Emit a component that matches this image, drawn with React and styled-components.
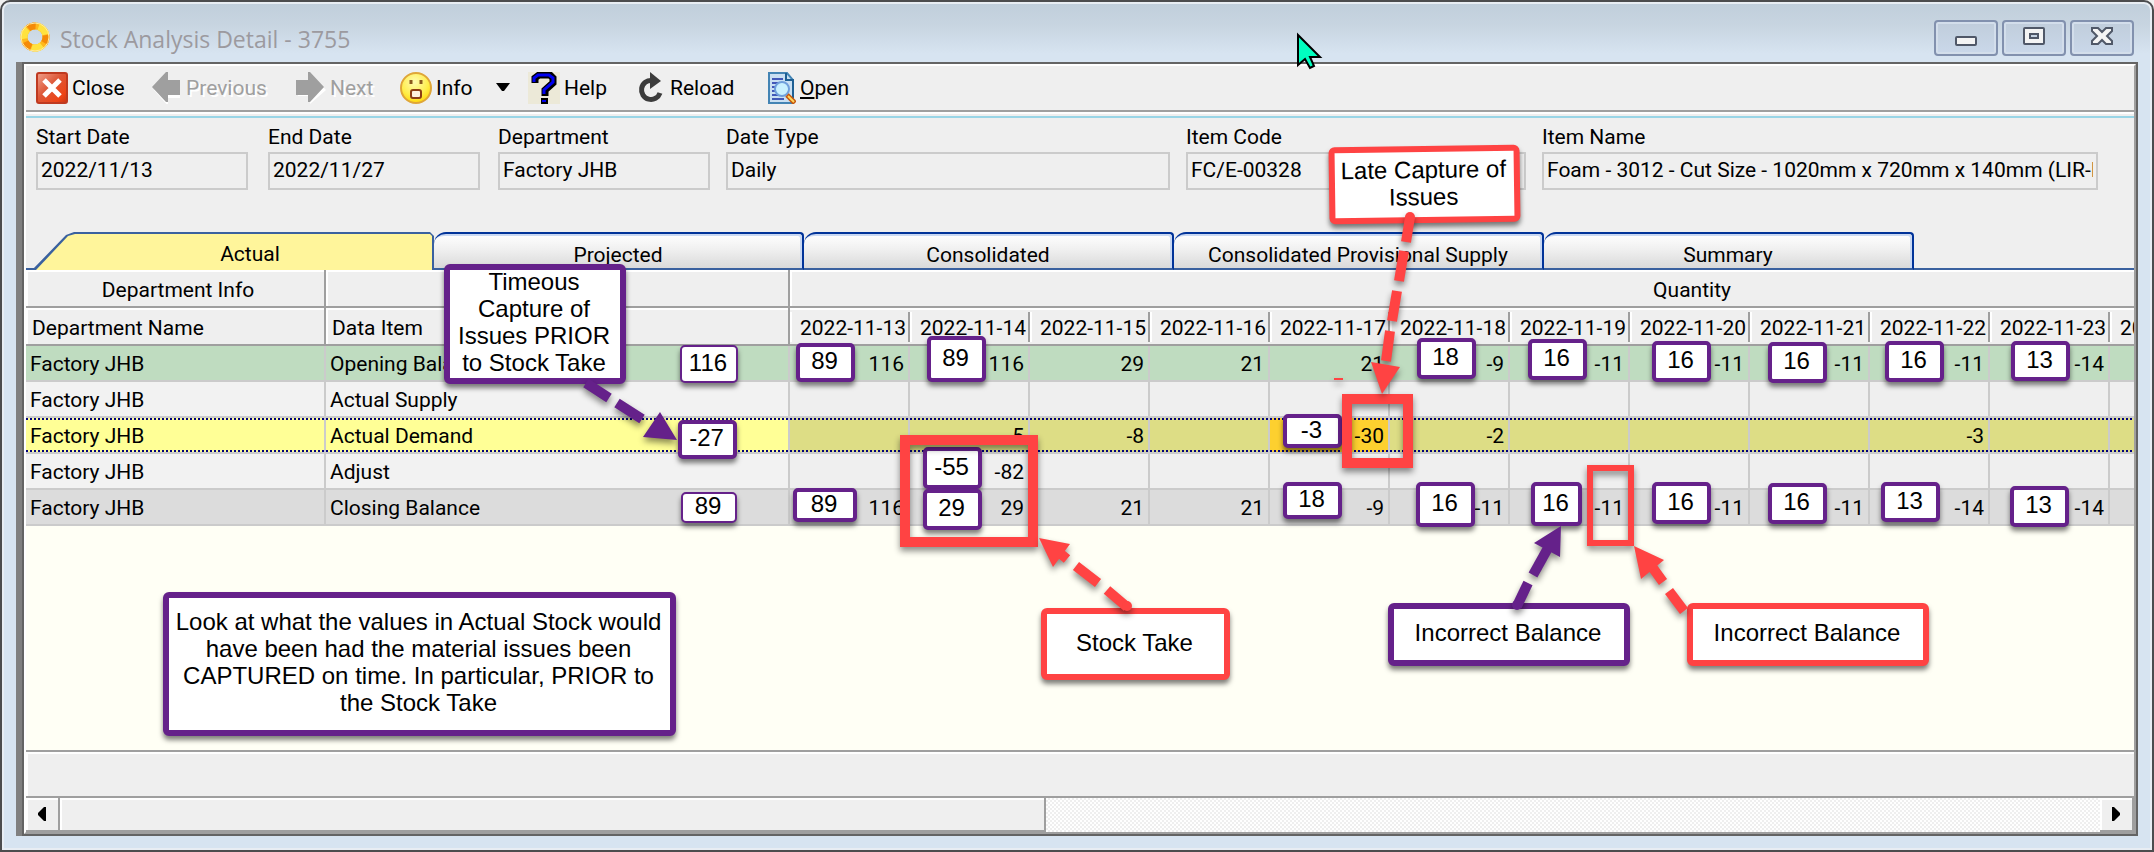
import React from "react";
import styled, { createGlobalStyle, css } from "styled-components";

const Global = createGlobalStyle`
  * { box-sizing: border-box; }
  body { margin: 0; background: #f0f0f0; }
  button, input { font: inherit; color: inherit; }
`;

const uiFont = 'Roboto, "Liberation Sans", sans-serif';
const noteFont = '"Liberation Sans", Arial, sans-serif';
const RED = "#ff4343";
const PURPLE = "#65218a";

/* ---------- window frame ---------- */

const Frame = styled.div`
  position: relative;
  display: flex;
  flex-direction: column;
  height: 100vh;
  min-height: 800px;
  overflow: hidden;
  padding: 0 14px 14px;
  border: 2px solid #4c4c4e;
  border-radius: 10px 10px 0 0;
  background: linear-gradient(#c0cedb 0, #c8d5e1 24px, #d7e4f1 52px);
  box-shadow: inset 0 0 0 2px #e8edf3;
  font: 21px/30px ${uiFont};
  color: #000;
`;

const TitleBar = styled.header`
  display: flex;
  align-items: flex-start;
  gap: 10px;
  flex: none;
  height: 60px;
  padding: 20px 4px 0 2px;
`;

const Title = styled.h1`
  flex: 1;
  margin: 0;
  padding-top: 2px;
  font: 400 23px/30px "Open Sans", "Noto Sans", sans-serif;
  color: #9c9a9f;
`;

const Controls = styled.div`
  display: flex;
  gap: 4px;
  margin-top: -2px;
`;

const ControlButton = styled.button`
  display: flex;
  align-items: center;
  justify-content: center;
  width: 64px;
  height: 36px;
  padding: 0 0 4px;
  border: 2px solid #8291ae;
  border-radius: 4px;
  background: linear-gradient(#c0cddb, #cad8ea);
  box-shadow: inset 0 0 0 2px #d3deeb;
`;

const Client = styled.main`
  display: flex;
  flex-direction: column;
  flex: 1;
  min-height: 0;
  margin: 0;
  border-left: 6px solid #808080;
`;

const Inner = styled.div`
  display: flex;
  flex-direction: column;
  flex: 1;
  min-height: 0;
  border: 2px solid #646464;
`;

const Page = styled.div`
  display: flex;
  flex-direction: column;
  flex: 1;
  min-height: 0;
  border: 2px solid #9f9f9f;
  border-top-color: #fff;
  border-left-color: #fff;
  background: #efefef;
`;

/* ---------- toolbar ---------- */

const Toolbar = styled.nav`
  display: flex;
  align-items: center;
  flex: none;
  height: 46px;
  padding-left: 10px;
  border-bottom: 2px solid #9f9f9f;
`;

const ToolButton = styled.button`
  display: flex;
  align-items: center;
  gap: 4px;
  width: ${(p) => p.$width}px;
  height: 40px;
  padding: 0;
  border: 0;
  background: none;
  white-space: nowrap;
  text-align: left;
  &:disabled {
    color: #9f9f9f;
    text-shadow: 2px 2px #fff;
  }
`;

const ToolIcon = styled.svg`
  flex: none;
  width: ${(p) => p.$w || 32}px;
  height: 32px;
`;

const Divider = styled.div`
  flex: none;
  height: 6px;
  border-top: 2px solid #fff;
  border-bottom: 2px solid #99d5e6;
`;

/* ---------- criteria form ---------- */

const Criteria = styled.form`
  display: grid;
  grid-template-columns: 216px 214px 212px 444px 340px minmax(0, 1fr);
  gap: 16px;
  flex: none;
  height: 114px;
  padding: 4px 36px 0 10px;
`;

const Field = styled.label`
  display: block;
  max-width: ${(p) => (p.$short ? "212px" : "none")};
`;

const FieldInput = styled.input`
  display: block;
  width: 100%;
  height: 38px;
  padding: 0 3px 2px;
  border: 2px solid #cbcbcb;
  border-radius: 0;
  background: #efefef;
`;

/* ---------- tabs ---------- */

const TabStrip = styled.div`
  display: flex;
  flex: none;
  height: 38px;
  &::after {
    content: "";
    flex: 1;
    border-bottom: 2px solid #3a619f;
  }
`;

const tabBase = css`
  flex: none;
  height: 38px;
  padding: 6px 0 0;
  text-align: center;
  white-space: nowrap;
`;

const Tab = styled.button`
  ${tabBase}
  width: 370px;
  border: 0 solid #003399;
  border-width: 2px 2px 2px 0;
  border-bottom-color: #3a619f;
  border-radius: 12px 4px 0 0;
  background: linear-gradient(#fff, #f0f0f0 45%, #dadada);
  box-shadow: inset -2px 2px #c9d8f2;
`;

const ActiveTab = styled.button`
  ${tabBase}
  position: relative;
  isolation: isolate;
  width: 408px;
  padding-left: 40px;
  border: 0;
  background: none;
  &::before,
  &::after {
    content: "";
    position: absolute;
    inset: 0;
    z-index: -1;
  }
  &::before {
    background: #3a619f;
    clip-path: polygon(0 36px, 8px 36px, 40px 3px, 48px 0, 404px 0, 408px 4px, 408px 38px, 0 38px);
  }
  &::after {
    background: #fff59b;
    clip-path: polygon(10px 38px, 42px 4px, 49px 2px, 404px 2px, 406px 4px, 406px 38px);
  }
`;

/* ---------- grid ---------- */

const GridArea = styled.section`
  flex: 1;
  min-height: 0;
  overflow: hidden;
  background: #fffff5;
`;

const Grid = styled.table`
  table-layout: fixed;
  width: 2564px;
  border-collapse: separate;
  border-spacing: 0;
  white-space: nowrap;
`;

const NameCol = styled.col`
  width: 300px;
`;
const ItemCol = styled.col`
  width: 464px;
`;
const DateCol = styled.col`
  width: 120px;
`;

const HeadCell = styled.th`
  height: 38px;
  padding: 4px 0 0 6px;
  border-right: 2px solid #9f9f9f;
  border-bottom: 2px solid #9f9f9f;
  background: #efefef;
  box-shadow: inset 2px 2px #fff;
  font-weight: 400;
  text-align: ${(p) => p.$align || "left"};
`;

const DateHead = styled.th`
  height: 38px;
  padding: 4px 4px 0 0;
  border-bottom: 2px solid #9f9f9f;
  background:
    linear-gradient(#9f9f9f, #9f9f9f) right 4px / 2px 30px no-repeat,
    linear-gradient(#fff, #fff) left 4px / 2px 30px no-repeat,
    #efefef;
  box-shadow: inset 0 2px #fff;
  font-weight: 400;
  text-align: right;
`;

const tones = {
  opening: ["#bfdcc0", "#bfdcc0"],
  plain: ["#f2f2f2", "#efefef"],
  selected: ["#ffff96", "#dddd85"],
  closing: ["#dcdcdc", "#dcdcdc"],
};

const dots = css`
  background-image:
    repeating-linear-gradient(90deg, #00007f 0 2px, transparent 2px 4px),
    repeating-linear-gradient(90deg, #00007f 0 2px, transparent 2px 4px);
  background-size: 100% 2px;
  background-position: top, bottom;
  background-repeat: no-repeat;
  background-clip: padding-box;
`;

const Cell = styled.td`
  height: 36px;
  padding: 2px 4px 0;
  border-right: 2px solid #cbcbcb;
  border-bottom: 2px solid #cbcbcb;
  background-color: ${(p) => (p.$flag ? "#fdd02f" : tones[p.$tone][p.$value ? 1 : 0])};
  text-align: ${(p) => (p.$value ? "right" : "left")};
  ${(p) => p.$tone === "selected" && dots}
`;

/* ---------- footer ---------- */

const SummaryBar = styled.div`
  flex: none;
  height: 48px;
  border-top: 2px solid #9f9f9f;
  border-bottom: 2px solid #9f9f9f;
  box-shadow: inset 2px 2px #fff;
`;

const ScrollBar = styled.div`
  display: flex;
  flex: none;
  height: 34px;
  background: repeating-conic-gradient(#efefef 0 25%, #fff 0 50%) 0 0 / 4px 4px;
`;

const ScrollPart = styled.button`
  flex: none;
  width: ${(p) => p.$width};
  height: 34px;
  margin-left: ${(p) => (p.$end ? "auto" : 0)};
  padding: 0;
  border: 0;
  border-right: 2px solid #9f9f9f;
  border-bottom: 2px solid #9f9f9f;
  background: #efefef;
  box-shadow: inset 2px 2px #fff;
  line-height: 0;
`;

/* ---------- annotations over the window ---------- */

const shadow = "0 4px 5px rgba(0, 0, 0, 0.5)";

const Layer = styled.div`
  position: absolute;
  inset: -2px;
  pointer-events: none;
`;

const Note = styled.div`
  position: absolute;
  left: ${(p) => p.$x}px;
  top: ${(p) => p.$y}px;
  display: flex;
  align-items: center;
  justify-content: center;
  width: ${(p) => p.$w}px;
  height: ${(p) => p.$h}px;
  padding: ${(p) => (p.$small ? "0 2px 4px 0" : "0 2px 4px 0")};
  border: ${(p) => p.$b || 6}px solid ${(p) => p.$color || PURPLE};
  border-radius: ${(p) => (p.$small ? 5 : 6)}px;
  background: #fff;
  box-shadow: ${shadow};
  font: 24px/27px ${noteFont};
  text-align: center;
  white-space: pre;
  transform: ${(p) => (p.$tilt ? "rotate(-0.8deg)" : "none")};
`;

const Marker = styled.div`
  position: absolute;
  left: ${(p) => p.$x}px;
  top: ${(p) => p.$y}px;
  width: ${(p) => p.$w}px;
  height: ${(p) => p.$h}px;
  border: ${(p) => p.$b}px solid ${RED};
  filter: drop-shadow(0 4px 3px rgba(0, 0, 0, 0.45));
`;

const Arrows = styled.svg`
  position: absolute;
  inset: 0;
  width: 100%;
  height: 100%;
  filter: drop-shadow(0 4px 3px rgba(0, 0, 0, 0.45));
`;

const Pointer = styled.svg`
  position: absolute;
  left: 1296px;
  top: 32px;
  width: 28px;
  height: 40px;
`;

/* ---------- data ---------- */

const dates = Array.from({ length: 15 }, (_, i) => `2022-11-${13 + i}`);

const rows = [
  ["Opening Balance", "opening", [116, 116, 29, 21, 21, -9, -11, -11, -11, -11, -14]],
  ["Actual Supply", "plain", []],
  ["Actual Demand", "selected", ["", -5, -8, "", -30, -2, "", "", "", -3]],
  ["Adjust", "plain", ["", -82]],
  ["Closing Balance", "closing", [116, 29, 21, 21, -9, -11, -11, -11, -11, -14, -14]],
];

const fields = [
  ["Start Date", "2022/11/13", true],
  ["End Date", "2022/11/27", true],
  ["Department", "Factory JHB", true],
  ["Date Type", "Daily"],
  ["Item Code", "FC/E-00328"],
  ["Item Name", "Foam - 3012 - Cut Size - 1020mm x 720mm x 140mm (LIR-I"],
];

/* text, x, y, width, height, border */
const badges = [
  ["116", 680, 345, 58, 38, 2],
  ["-27", 678, 420, 59, 39, 4],
  ["89", 681, 492, 56, 31, 2],
  ["89", 796, 343, 59, 39, 4],
  ["89", 927, 336, 59, 46, 4],
  ["18", 1417, 338, 59, 41, 4],
  ["16", 1528, 339, 59, 41, 4],
  ["16", 1652, 341, 59, 41, 4],
  ["16", 1768, 342, 59, 41, 4],
  ["16", 1885, 341, 59, 41, 4],
  ["13", 2011, 341, 59, 40, 4],
  ["-3", 1283, 414, 59, 34, 4],
  ["-55", 923, 447, 59, 42, 4],
  ["29", 923, 489, 59, 41, 4],
  ["89", 793, 488, 64, 34, 4],
  ["18", 1283, 482, 59, 37, 4],
  ["16", 1416, 482, 59, 45, 4],
  ["16", 1531, 482, 51, 44, 4],
  ["16", 1652, 482, 59, 42, 4],
  ["16", 1768, 483, 59, 41, 4],
  ["13", 1881, 482, 59, 40, 4],
  ["13", 2010, 486, 59, 41, 4],
];

/* ---------- icons ---------- */

const AppIcon = () => (
  <svg width="32" height="32" viewBox="0 0 32 32" fill="none" strokeWidth="7">
    <circle cx="17" cy="15" r="11" stroke="#ffb81c" />
    <circle cx="17" cy="15" r="11" stroke="#ffe23f" strokeDasharray="11 12" strokeDashoffset="-19" transform="rotate(190 17 15)" />
    <circle cx="17" cy="15" r="11" stroke="#f58a07" strokeDasharray="8 15.04" transform="rotate(-10 17 15)" />
    <circle cx="17" cy="15" r="14" stroke="#ffe9a0" strokeWidth="1" />
  </svg>
);

const CloseIcon = () => (
  <ToolIcon viewBox="0 0 32 32">
    <defs>
      <linearGradient id="closeFill" x1="0" y1="0" x2="1" y2="1">
        <stop offset="0" stopColor="#f0a08c" />
        <stop offset="0.45" stopColor="#dd5636" />
        <stop offset="0.8" stopColor="#ee4416" />
        <stop offset="1" stopColor="#c53614" />
      </linearGradient>
    </defs>
    <rect x="1" y="1" width="30" height="30" rx="2" fill="url(#closeFill)" stroke="#bf3a20" strokeWidth="2" />
    <path d="M8 8L24 24M24 8L8 24" stroke="#fff" strokeWidth="5" />
  </ToolIcon>
);

const ArrowIcon = ({ flip }) => (
  <ToolIcon $w={32} viewBox="0 0 32 32">
    <g transform={flip ? "matrix(-1 0 0 1 32 0)" : undefined}>
      <path d={flip ? "M0 18L16 2V10H28V24H16V32Z" : "M4 18L18 4V10H30V26H18V34Z"} fill="#fff" />
      <path d="M2 15L16 0H18V8H30V23H18V30H16Z" fill="#9f9f9f" />
    </g>
  </ToolIcon>
);

const InfoIcon = () => (
  <ToolIcon viewBox="0 0 32 32">
    <defs>
      <radialGradient id="face" cx="0.45" cy="0.3" r="0.75">
        <stop offset="0" stopColor="#fffbb0" />
        <stop offset="0.6" stopColor="#ffee4d" />
        <stop offset="1" stopColor="#ffd400" />
      </radialGradient>
    </defs>
    <circle cx="16" cy="16" r="15" fill="url(#face)" stroke="#dfa638" strokeWidth="2" />
    <path d="M11 8V12M21 8V12" stroke="#8c5a1e" strokeWidth="3" />
    <rect x="11" y="18" width="10" height="8" rx="2" fill="#fff0dc" stroke="#8c3c14" strokeWidth="2" />
  </ToolIcon>
);

const HelpIcon = () => (
  <ToolIcon viewBox="0 0 32 32" fill="none">
    <rect width="32" height="32" fill="#ece9d8" />
    <path d="M7 11V6L11 3H22L25 6V11L17 18V24" stroke="#000" strokeWidth="7" />
    <path d="M6 10V6L10 3H21L25 6V10L16 18V22" stroke="#0000f0" strokeWidth="3" />
    <path d="M13 26H20V32H13Z" fill="#000" />
    <path d="M14 28H18V30H14Z" fill="#0000f0" />
  </ToolIcon>
);

const ReloadIcon = () => (
  <ToolIcon $w={30} viewBox="0 0 30 32" fill="none">
    <path d="M16 8.500A9.500 9.500 0 1 0 24 21" stroke="#3c3c3c" strokeWidth="5" />
    <path d="M14 0L25 9L14 17Z" fill="#3c3c3c" />
  </ToolIcon>
);

const OpenIcon = () => (
  <ToolIcon $w={28} viewBox="0 0 28 32" fill="none">
    <path d="M1 1H19L25 8V31H1Z" fill="#c9dff2" stroke="#4384b4" strokeWidth="2" />
    <path d="M18 1V8H25V26" stroke="#1d5f93" strokeWidth="2" />
    <path d="M4 7H15M4 11H10M4 15H7M4 19H7M4 23H10M4 27H16" stroke="#4258b8" strokeWidth="2" />
    <circle cx="14" cy="17" r="7" fill="#c8f0ff" stroke="#6f9fdc" strokeWidth="2" />
    <path d="M19 23L27 31" stroke="#c6560c" strokeWidth="5" />
    <path d="M20 24L26 30" stroke="#ffd65c" strokeWidth="2" />
  </ToolIcon>
);

const glyphStroke = { stroke: "#505868", strokeWidth: 2, fill: "#f4f4f4" };

export default function App() {
  return (
    <>
      <Global />
      <Frame>
        <TitleBar>
          <AppIcon />
          <Title>Stock Analysis Detail - 3755</Title>
          <Controls>
            <ControlButton aria-label="Minimize">
              <svg width="22" height="20" viewBox="0 0 22 20">
                <rect x="1" y="11" width="20" height="8" rx="1" {...glyphStroke} />
              </svg>
            </ControlButton>
            <ControlButton aria-label="Maximize">
              <svg width="22" height="20" viewBox="0 0 22 20">
                <rect x="1" y="2" width="20" height="16" rx="1" {...glyphStroke} />
                <rect x="7" y="8" width="8" height="4" stroke="#505868" strokeWidth="2" fill="#c6d3e3" />
              </svg>
            </ControlButton>
            <ControlButton aria-label="Close window">
              <svg width="24" height="20" viewBox="0 0 24 20">
                <path d="M2 2H8L12 6L16 2H22V5L17 10L22 15V18H16L12 14L8 18H2V15L7 10L2 5Z" {...glyphStroke} />
              </svg>
            </ControlButton>
          </Controls>
        </TitleBar>

        <Client>
          <Inner>
            <Page>
              <Toolbar>
                <ToolButton $width={114}><CloseIcon />Close</ToolButton>
                <ToolButton $width={144} disabled><ArrowIcon />Previous</ToolButton>
                <ToolButton $width={106} disabled><ArrowIcon flip />Next</ToolButton>
                <ToolButton $width={94}><InfoIcon />Info</ToolButton>
                <ToolButton $width={34} aria-label="More info">
                  <svg width="18" height="10" viewBox="0 0 18 10"><path d="M2 0H16L10 8H8Z" /></svg>
                </ToolButton>
                <ToolButton $width={108}><HelpIcon />Help</ToolButton>
                <ToolButton $width={132}><ReloadIcon />Reload</ToolButton>
                <ToolButton $width={100}><OpenIcon /><span><u>O</u>pen</span></ToolButton>
              </Toolbar>
              <Divider />

              <Criteria>
                {fields.map(([label, value, short]) => (
                  <Field key={label} $short={short}>
                    {label}
                    <FieldInput readOnly value={value} />
                  </Field>
                ))}
              </Criteria>

              <TabStrip role="tablist">
                <ActiveTab role="tab" aria-selected="true">Actual</ActiveTab>
                {["Projected", "Consolidated", "Consolidated Provisional Supply", "Summary"].map((t) => (
                  <Tab key={t} role="tab" aria-selected="false">{t}</Tab>
                ))}
              </TabStrip>

              <GridArea>
                <Grid>
                  <colgroup>
                    <NameCol />
                    <ItemCol />
                    {dates.map((d) => <DateCol key={d} />)}
                  </colgroup>
                  <thead>
                    <tr>
                      <HeadCell $align="center">Department Info</HeadCell>
                      <HeadCell />
                      <HeadCell $align="center" colSpan={15}>Quantity</HeadCell>
                    </tr>
                    <tr>
                      <HeadCell>Department Name</HeadCell>
                      <HeadCell>Data Item</HeadCell>
                      {dates.map((d) => <DateHead key={d}>{d}</DateHead>)}
                    </tr>
                  </thead>
                  <tbody>
                    {rows.map(([name, tone, values]) => (
                      <tr key={name}>
                        <Cell $tone={tone}>Factory JHB</Cell>
                        <Cell $tone={tone}>{name}</Cell>
                        {dates.map((d, i) => (
                          <Cell key={d} $tone={tone} $value $flag={values[i] === -30}>{values[i]}</Cell>
                        ))}
                      </tr>
                    ))}
                  </tbody>
                </Grid>
              </GridArea>

              <SummaryBar />
              <ScrollBar>
                <ScrollPart $width="34px" aria-label="Scroll left">
                  <svg width="8" height="14" viewBox="0 0 8 14"><path d="M8 0V14H6L0 8V6L6 0Z" /></svg>
                </ScrollPart>
                <ScrollPart $width="calc(47% - 5px)" aria-label="Scroll thumb" />
                <ScrollPart $width="34px" $end aria-label="Scroll right">
                  <svg width="8" height="14" viewBox="0 0 8 14"><path d="M0 0V14H2L8 8V6L2 0Z" /></svg>
                </ScrollPart>
              </ScrollBar>
            </Page>
          </Inner>
        </Client>

        <Layer>
          <Marker $x={1334} $y={378} $w={9} $h={2} $b={1} />
          {badges.map(([text, x, y, w, h, b]) => (
            <Note key={`${x}-${y}`} $small $x={x} $y={y} $w={w} $h={h} $b={b}>{text}</Note>
          ))}
          <Marker $x={900} $y={435} $w={138} $h={112} $b={10} />
          <Marker $x={1342} $y={394} $w={71} $h={74} $b={10} />
          <Marker $x={1587} $y={465} $w={47} $h={81} $b={6} />
          <Note $x={444} $y={264} $w={182} $h={120}>{"Timeous\nCapture of\nIssues PRIOR\nto Stock Take"}</Note>
          <Note $x={1329} $y={146} $w={191} $h={77} $color={RED} $tilt>{"Late Capture of\nIssues"}</Note>
          <Note $x={1041} $y={608} $w={189} $h={72} $color={RED}>Stock Take</Note>
          <Note $x={1388} $y={603} $w={242} $h={63}>Incorrect Balance</Note>
          <Note $x={1687} $y={603} $w={242} $h={63} $color={RED}>Incorrect Balance</Note>
          <Note $x={163} $y={592} $w={513} $h={144}>
            {"Look at what the values in Actual Stock would\nhave been had the material issues been\nCAPTURED on time. In particular, PRIOR to\nthe Stock Take"}
          </Note>

          <Arrows fill="none" strokeWidth="10">
            <g stroke={PURPLE}>
              <path d="M586 383L609 398M617 403L642 419" />
              <path d="M1517 606L1528 583" strokeLinecap="butt" />
              <circle cx="1517" cy="605" r="5" fill={PURPLE} stroke="none" />
              <path d="M1533 575L1548 548" />
              <path d="M660 412L677 440L643 437ZM1561 526L1534 543L1560 557Z" fill={PURPLE} stroke="none" />
            </g>
            <g stroke={RED}>
              <path d="M1410 217L1406 242M1404 251L1399 281M1397 291L1392 321M1390 331L1386 361" />
              <circle cx="1410" cy="217" r="5" fill={RED} stroke="none" />
              <path d="M1371 362L1400 367L1382 394Z" fill={RED} stroke="none" />
              <path d="M1127 607L1107 590M1098 583L1076 566M1067 559L1056 550" />
              <circle cx="1127" cy="606" r="5" fill={RED} stroke="none" />
              <path d="M1039 538L1070 544L1053 567Z" fill={RED} stroke="none" />
              <path d="M1684 611L1669 591M1663 582L1650 564" />
              <path d="M1634 546L1664 560L1641 579Z" fill={RED} stroke="none" />
            </g>
          </Arrows>
          <Pointer viewBox="0 0 28 40">
            <path d="M2 3V33L9 27L14 36L18 34L14 25H24Z" fill="#00ffc0" stroke="#000" strokeWidth="2" />
          </Pointer>
        </Layer>
      </Frame>
    </>
  );
}
